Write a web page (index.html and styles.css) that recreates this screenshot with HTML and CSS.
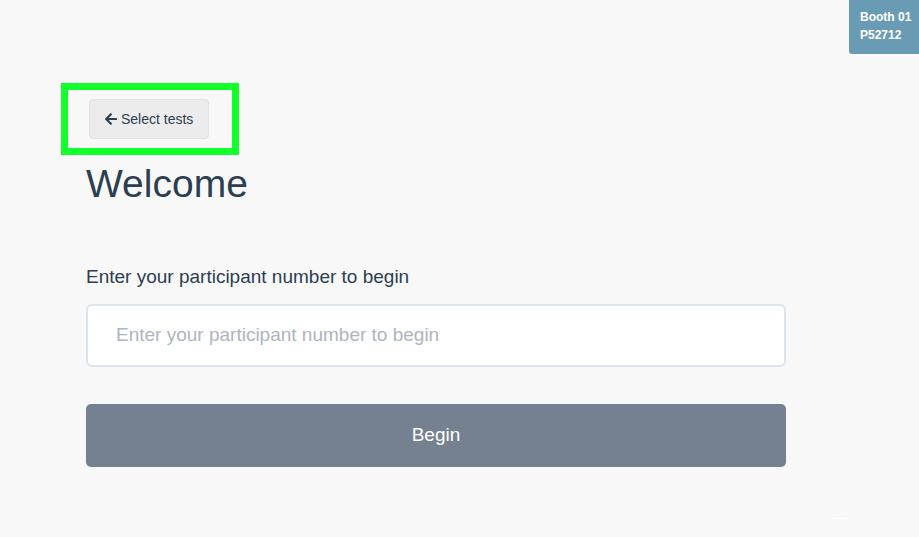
FILE: index.html
```html
<!DOCTYPE html>
<html lang="en">
<head>
<meta charset="utf-8">
<title>Welcome</title>
<link rel="stylesheet" href="styles.css">
</head>
<body>
<div class="badge">
  <div>Booth 01</div>
  <div>P52712</div>
</div>
<main class="page">
  <div class="highlight">
    <button class="back-btn" type="button">
      <svg class="arrow" width="12" height="14" viewBox="0 0 448 512" aria-hidden="true"><path fill="currentColor" d="M257.5 445.1l-22.2 22.2c-9.4 9.4-24.6 9.4-33.9 0L7 273c-9.4-9.4-9.4-24.6 0-33.9L201.4 44.7c9.4-9.4 24.6-9.4 33.9 0l22.2 22.2c9.5 9.5 9.3 25-.4 34.3L136.6 216H424c13.3 0 24 10.7 24 24v32c0 13.3-10.7 24-24 24H136.6l120.5 114.8c9.8 9.3 10 24.8.4 34.3z"/></svg>
      <span>Select tests</span>
    </button>
  </div>
  <h1 class="title">Welcome</h1>
  <label class="label" for="pn">Enter your participant number to begin</label>
  <input id="pn" class="field" type="text" placeholder="Enter your participant number to begin">
  <button class="begin" type="button">Begin</button>
</main>
<div class="speck"></div>
</body>
</html>
```

FILE: styles.css
```css
html, body {
  margin: 0;
  padding: 0;
  background: #f8f8f8;
  font-family: "Liberation Sans", Arial, sans-serif;
  color: #2c3e50;
}

body {
  width: 919px;
  height: 537px;
  overflow: hidden;
}

.badge {
  position: absolute;
  top: 0;
  right: 0;
  width: 50px;
  padding: 8px 9px 10px 11px;
  background: #6a9bb5;
  color: #ffffff;
  font-size: 12px;
  font-weight: bold;
  line-height: 18px;
  border-bottom-left-radius: 3px;
  white-space: nowrap;
}

.page {
  display: flex;
  flex-direction: column;
  align-items: flex-start;
  width: 700px;
  padding: 83px 0 0 86px;
}

.highlight {
  margin-left: -25px;
  border: 7px solid #12ff2b;
  padding: 9px 23px 9px 21px;
}

.back-btn {
  display: flex;
  align-items: center;
  gap: 4px;
  height: 40px;
  box-sizing: border-box;
  padding: 0 15px 0 15px;
  background: #ececec;
  border: 1px solid #dde3e9;
  border-radius: 4px;
  font-family: "Liberation Sans", Arial, sans-serif;
  font-size: 14px;
  line-height: 18px;
  color: #2c3e50;
}

.arrow {
  display: block;
  color: #2c3e50;
}

.title {
  margin: 6px 0 0;
  font-size: 39px;
  font-weight: normal;
  line-height: 1.2;
  color: #2c3e50;
}

.label {
  margin-top: 58px;
  font-size: 19px;
  line-height: 22.8px;
  color: #2c3e50;
}

.field {
  margin-top: 15px;
  width: 700px;
  height: 63px;
  box-sizing: border-box;
  padding: 0 28px;
  background: #ffffff;
  border: 2px solid #dce4ec;
  border-radius: 6px;
  font-family: "Liberation Sans", Arial, sans-serif;
  font-size: 19px;
  color: #2c3e50;
  outline: none;
}

.field::placeholder {
  color: #acb6c0;
}

.begin {
  margin-top: 37px;
  width: 700px;
  height: 63px;
  background: #758190;
  border: none;
  border-radius: 5px;
  color: #ffffff;
  font-family: "Liberation Sans", Arial, sans-serif;
  font-size: 19px;
}

.speck {
  position: absolute;
  left: 834px;
  top: 518px;
  width: 14px;
  height: 1px;
  background: #ffffff;
}
```
